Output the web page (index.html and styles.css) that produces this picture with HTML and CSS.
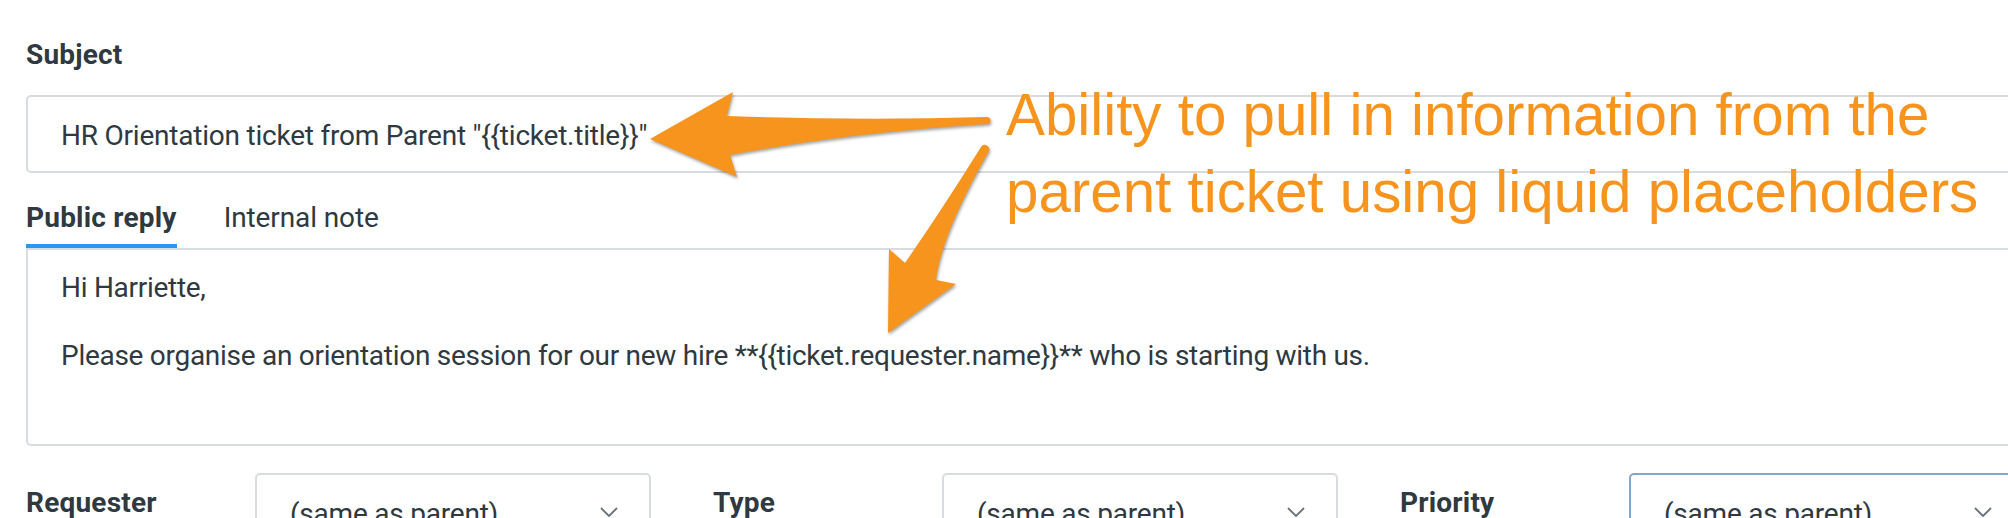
FILE: index.html
```html
<!DOCTYPE html>
<html lang="en">
<head>
<meta charset="utf-8">
<title>Child ticket template</title>
<link rel="stylesheet" href="styles.css">
</head>
<body>
<div class="page">
  <div class="field-label">Subject</div>
  <div class="text-input">HR Orientation ticket from Parent "{{ticket.title}}"</div>

  <div class="tabs">
    <div class="tab tab-active">Public reply</div>
    <div class="tab">Internal note</div>
  </div>

  <div class="editor">
    <p class="para">Hi Harriette,</p>
    <p class="para">Please organise an orientation session for our new hire **{{ticket.requester.name}}** who is starting with us.</p>
  </div>

  <div class="props">
    <div class="prop">
      <div class="prop-label">Requester</div>
      <div class="select"><span>(same as parent)</span><svg class="chev" width="18" height="10" viewBox="0 0 18 10"><polyline points="1,1 9,9 17,1"/></svg></div>
    </div>
    <div class="prop">
      <div class="prop-label">Type</div>
      <div class="select"><span>(same as parent)</span><svg class="chev" width="18" height="10" viewBox="0 0 18 10"><polyline points="1,1 9,9 17,1"/></svg></div>
    </div>
    <div class="prop">
      <div class="prop-label">Priority</div>
      <div class="select select-focused"><span>(same as parent)</span><svg class="chev" width="18" height="10" viewBox="0 0 18 10"><polyline points="1,1 9,9 17,1"/></svg></div>
    </div>
  </div>

  <div class="annotation">Ability to pull in information from the<br>parent ticket using liquid placeholders</div>

  <svg class="arrows" width="2008" height="518" viewBox="0 0 2008 518">
    <path d="M 987 117 Q 860 121 727 116 L 733 92 L 650 139 L 737 177 L 730 155 Q 845 133 987 124 A 3.5 3.5 0 0 0 987 117 Z"/>
    <path d="M 981 147 Q 945 205 905 263 L 889 249 L 888 333 L 956 284 L 936 280 Q 941.5 234.5 989 151 A 4.5 4.5 0 0 0 981 147 Z"/>
  </svg>
</div>
</body>
</html>
```

FILE: styles.css
```css
html, body {
  margin: 0;
  width: 2008px;
  height: 518px;
  overflow: hidden;
  background: #ffffff;
}

body {
  font-family: Roboto, "Liberation Sans", sans-serif;
  color: #2f3941;
}

.page {
  position: relative;
  width: 1999px;
  padding: 38px 0 0 26px;
}

.field-label {
  font-size: 28px;
  font-weight: 700;
  letter-spacing: 0.2px;
  line-height: 34px;
}

.text-input {
  margin-top: 23px;
  height: 78px;
  box-sizing: border-box;
  border: 2px solid #d8dcde;
  border-radius: 5px;
  padding: 22px 0 0 33px;
  font-size: 28px;
  letter-spacing: -0.22px;
  line-height: 34px;
  white-space: nowrap;
}

.tabs {
  display: flex;
  gap: 47px;
  margin-top: 28px;
}

.tab {
  font-size: 28px;
  letter-spacing: -0.1px;
  line-height: 34px;
  padding-bottom: 9px;
  border-bottom: 4px solid transparent;
}

.tab-active {
  font-weight: 700;
  letter-spacing: 0.2px;
  border-bottom-color: #2998f0;
}

.editor {
  height: 198px;
  box-sizing: border-box;
  border: 2px solid #d8dcde;
  border-radius: 0 5px 5px 5px;
  padding: 21px 0 0 33px;
  font-size: 28px;
  letter-spacing: -0.28px;
  line-height: 34px;
}

.para {
  margin: 0 0 34px 0;
  white-space: nowrap;
}

.props {
  display: grid;
  grid-template-columns: repeat(3, 625px);
  column-gap: 62px;
  margin-top: 27px;
}

.prop {
  display: flex;
}

.prop-label {
  width: 229px;
  flex: none;
  padding-top: 13px;
  font-size: 28px;
  font-weight: 700;
  letter-spacing: 0.2px;
  line-height: 34px;
}

.select {
  width: 396px;
  height: 78px;
  box-sizing: border-box;
  border: 2px solid #d8dcde;
  border-radius: 5px;
  padding: 22px 31px 0 33px;
  display: flex;
  justify-content: space-between;
  align-items: flex-start;
  font-size: 28px;
  letter-spacing: -0.22px;
  line-height: 34px;
  white-space: nowrap;
}

.select-focused {
  border-color: #84a7c9;
}

.chev {
  margin-top: 10px;
  flex: none;
}

.chev polyline {
  fill: none;
  stroke: #68737d;
  stroke-width: 1.8;
}

.annotation {
  position: absolute;
  left: 1006px;
  top: 76px;
  font-family: "Liberation Sans", Arial, sans-serif;
  font-size: 58.3px;
  line-height: 77px;
  color: #f7941d;
  white-space: nowrap;
}

.arrows {
  position: absolute;
  left: 0;
  top: 0;
  pointer-events: none;
  filter: drop-shadow(1px 2px 1.5px rgba(0, 0, 0, 0.35));
}

.arrows path {
  fill: #f7941d;
}
```
